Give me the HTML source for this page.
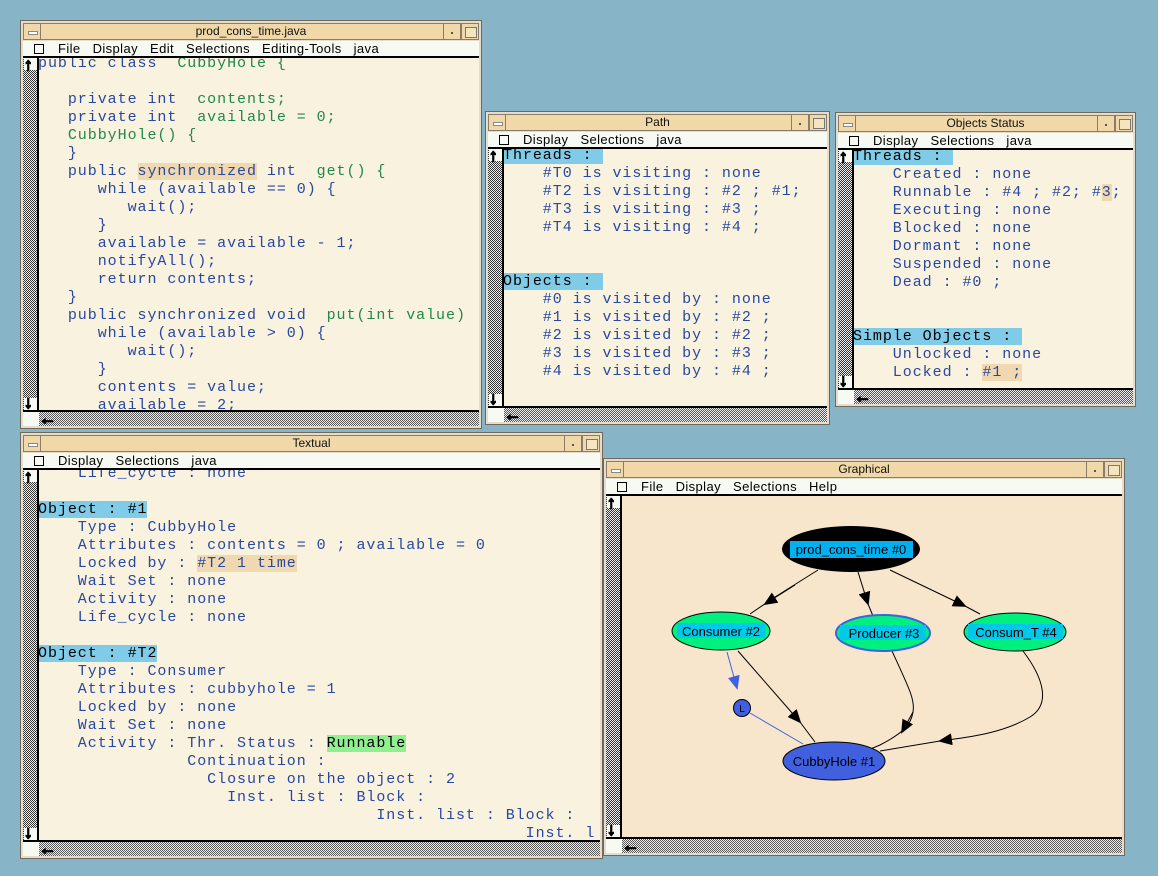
<!DOCTYPE html>
<html><head><meta charset="utf-8"><style>
*{margin:0;padding:0;box-sizing:border-box}
body{width:1158px;height:876px;background:#88b4c8;position:relative;overflow:hidden;font-family:"Liberation Sans",sans-serif}
.win{position:absolute;background:#e4dccc;border:1px solid #706858}
.title{position:absolute;left:2px;right:2px;top:2px;height:17px;background:#f0d8a8;border:1px solid #8a7c68;font-size:12px;text-align:center;line-height:15px;color:#111}
.bl,.br1,.br2{position:absolute;top:-1px;width:18px;height:17px;border:1px solid #8a7c68;background:#f0d8a8}
.bl{left:-1px}.bl:after{content:"";position:absolute;left:4px;top:7px;width:8px;height:2px;background:#fff;border:1px solid #888}
.br1{right:17px}.br1:after{content:"";position:absolute;left:7px;top:8px;width:2px;height:2px;background:#555}
.br2{right:-1px}.br2:after{content:"";position:absolute;left:3px;top:3px;width:10px;height:9px;border:1px solid #777;background:#f4e4c0}
.menu{position:absolute;left:2px;right:2px;top:20px;height:17px;background:#f6faf2;border-bottom:2px solid #000;font-size:13px;letter-spacing:0.4px;line-height:15px;white-space:nowrap;color:#000}
.menu i{display:inline-block;width:10px;height:10px;border:1px solid #000;margin:0 14px 0 11px;vertical-align:-1px}
.menu b{font-weight:normal;margin-right:12px}
.vs{position:absolute;left:2px;top:37px;bottom:18px;width:16px;border-right:2px solid #000;background:repeating-conic-gradient(#333 0 25%,#eee 0 50%) 0 0/2px 2px}
.vs:before{content:"";position:absolute;left:1px;top:0;width:13px;height:12px;background:#f6faf2}
.vs:after{content:"";position:absolute;left:1px;bottom:0;width:13px;height:12px;background:#f6faf2}
.hs{position:absolute;left:2px;right:2px;bottom:2px;height:16px;border-top:2px solid #000;background:repeating-conic-gradient(#555 0 25%,#eee 0 50%) 0 0/2px 2px}
.hs:before{content:"";position:absolute;left:0;top:0;width:16px;height:14px;background:#f6faf2}
.c{position:absolute;left:18px;right:2px;top:37px;bottom:18px;background:#f9f2df;overflow:hidden}
pre{font-family:"Liberation Mono",monospace;font-size:15px;letter-spacing:0.95px;line-height:18px;color:#2848a0;position:absolute;left:0}
.g{color:#208848}.h{background:#80cce8;color:#000}.o{background:#f0d8b0}.k{background:#90f090;color:#000}
.au,.ad,.al{position:absolute;font-size:17px;font-weight:bold;color:#000;line-height:13px;z-index:2;-webkit-text-stroke:1.5px #000}
.au{left:3px;top:37px}.ad{left:3px;bottom:19px}.al{left:18px;bottom:3px}
</style></head><body>

<!-- Editor -->
<div class="win" style="left:20px;top:20px;width:462px;height:409px">
<div class="title">prod_cons_time.java<div class="bl"></div><div class="br1"></div><div class="br2"></div></div>
<div class="menu"><i></i><b>File</b><b>Display</b><b>Edit</b><b>Selections</b><b>Editing-Tools</b><b>java</b></div>
<div class="vs"></div><div class="hs"></div><span class="au">↑</span><span class="ad">↓</span><span class="al">←</span>
<div class="c"><pre style="top:-3px;left:-1px">public class  <span class="g">CubbyHole {</span>

   private int  <span class="g">contents;</span>
   private int  <span class="g">available = 0;</span>
   <span class="g">CubbyHole() {</span>
   }
   public <span class="o">synchronized</span> int  <span class="g">get() {</span>
      while (available == 0) {
         wait();
      }
      available = available - 1;
      notifyAll();
      return contents;
   }
   public synchronized void  <span class="g">put(int value)</span>
      while (available &gt; 0) {
         wait();
      }
      contents = value;
      available = 2;</pre></div>
</div>

<!-- Path -->
<div class="win" style="left:485px;top:111px;width:345px;height:314px">
<div class="title">Path<div class="bl"></div><div class="br1"></div><div class="br2"></div></div>
<div class="menu"><i></i><b>Display</b><b>Selections</b><b>java</b></div>
<div class="vs"></div><div class="hs"></div><span class="au">↑</span><span class="ad">↓</span><span class="al">←</span>
<div class="c"><pre style="top:-2px;left:-1px"><span class="h">Threads : </span>
    #T0 is visiting : none
    #T2 is visiting : #2 ; #1;
    #T3 is visiting : #3 ;
    #T4 is visiting : #4 ;


<span class="h">Objects : </span>
    #0 is visited by : none
    #1 is visited by : #2 ;
    #2 is visited by : #2 ;
    #3 is visited by : #3 ;
    #4 is visited by : #4 ;</pre></div>
</div>

<!-- Objects Status -->
<div class="win" style="left:835px;top:112px;width:301px;height:295px">
<div class="title">Objects Status<div class="bl"></div><div class="br1"></div><div class="br2"></div></div>
<div class="menu"><i></i><b>Display</b><b>Selections</b><b>java</b></div>
<div class="vs"></div><div class="hs"></div><span class="au">↑</span><span class="ad">↓</span><span class="al">←</span>
<div class="c"><pre style="top:-2px;left:-1px"><span class="h">Threads : </span>
    Created : none
    Runnable : #4 ; #2; #<span class="o">3</span>;
    Executing : none
    Blocked : none
    Dormant : none
    Suspended : none
    Dead : #0 ;


<span class="h">Simple Objects : </span>
    Unlocked : none
    Locked : <span class="o">#1 ;</span></pre></div>
</div>

<!-- Textual -->
<div class="win" style="left:20px;top:432px;width:583px;height:427px">
<div class="title">Textual<div class="bl"></div><div class="br1"></div><div class="br2"></div></div>
<div class="menu"><i></i><b>Display</b><b>Selections</b><b>java</b></div>
<div class="vs"></div><div class="hs"></div><span class="au">↑</span><span class="ad">↓</span><span class="al">←</span>
<div class="c"><pre style="top:-5px;left:-1px">    Life_cycle : none

<span class="h">Object : #1</span>
    Type : CubbyHole
    Attributes : contents = 0 ; available = 0
    Locked by : <span class="o">#T2 1 time</span>
    Wait Set : none
    Activity : none
    Life_cycle : none

<span class="h">Object : #T2</span>
    Type : Consumer
    Attributes : cubbyhole = 1
    Locked by : none
    Wait Set : none
    Activity : Thr. Status : <span class="k">Runnable</span>
               Continuation :
                 Closure on the object : 2
                   Inst. list : Block :
                                  Inst. list : Block :
                                                 Inst. l</pre></div>
</div>

<!-- Graphical -->
<div class="win" style="left:603px;top:458px;width:522px;height:398px">
<div class="title">Graphical<div class="bl"></div><div class="br1"></div><div class="br2"></div></div>
<div class="menu"><i></i><b>File</b><b>Display</b><b>Selections</b><b>Help</b></div>
<div class="vs"></div><div class="hs"></div><span class="au">↑</span><span class="ad">↓</span><span class="al">←</span>
<div class="c" style="background:#f8e6cc"></div>
</div>

<svg width="1158" height="876" style="position:absolute;left:0;top:0" font-family="Liberation Sans,sans-serif">
<defs><marker id="a" markerWidth="14" markerHeight="12" refX="12" refY="6" orient="auto" markerUnits="userSpaceOnUse"><path d="M0,0 L14,6 L0,12z" fill="#000"/></marker>
<marker id="b" markerWidth="14" markerHeight="12" refX="12" refY="6" orient="auto" markerUnits="userSpaceOnUse"><path d="M0,0 L14,6 L0,12z" fill="#4060e0"/></marker></defs>
<g stroke="#000" fill="none" stroke-width="1">
<path d="M818,570 L775,597 L750,614" />
<path d="M795,585 L765,604" marker-end="url(#a)"/>
<path d="M858,572 L868,604" marker-end="url(#a)"/>
<path d="M868,604 L873,616"/>
<path d="M890,570 L965,606" marker-end="url(#a)"/>
<path d="M965,606 L980,614"/>
<path d="M738,651 L800,722" marker-end="url(#a)"/>
<path d="M800,722 L815,742"/>
<path d="M892,651 C910,690 915,700 913,712 C911,725 903,733 880,745 L868,750" />
<path d="M913,712 L902,732" marker-end="url(#a)"/>
<path d="M1023,651 C1045,680 1050,705 1030,717 C1000,735 960,738 940,741" marker-end="url(#a)"/>
<path d="M940,741 L880,751"/>
</g>
<path d="M727,652 L737,688" stroke="#4060e0" fill="none" marker-end="url(#b)"/>
<path d="M750,713 L803,744" stroke="#4060e0" fill="none"/>
<ellipse cx="851" cy="549" rx="69" ry="23" fill="#000"/>
<rect x="790" y="541" width="123" height="17" fill="#00b0f0"/>
<text x="851" y="554" font-size="13" text-anchor="middle" fill="#000">prod_cons_time #0</text>
<ellipse cx="721" cy="631" rx="49" ry="19" fill="#00f080" stroke="#000"/>
<rect x="677" y="623" width="88" height="15" fill="#00c8e8"/>
<text x="721" y="636" font-size="13" text-anchor="middle">Consumer #2</text>
<ellipse cx="883" cy="633" rx="47" ry="18" fill="#00f080" stroke="#4060e0" stroke-width="2"/>
<rect x="840" y="625" width="86" height="15" fill="#00c8e8"/>
<text x="884" y="638" font-size="13" text-anchor="middle">Producer #3</text>
<ellipse cx="1015" cy="632" rx="51" ry="19" fill="#00f080" stroke="#000"/>
<rect x="968" y="624" width="95" height="15" fill="#00c8e8"/>
<text x="1016" y="637" font-size="13" text-anchor="middle">Consum_T #4</text>
<ellipse cx="834" cy="761" rx="51" ry="19" fill="#4060e0" stroke="#000"/>
<text x="834" y="766" font-size="13" text-anchor="middle">CubbyHole #1</text>
<circle cx="742" cy="708" r="8.5" fill="#4060e0" stroke="#000"/>
<text x="742" y="712" font-size="10" text-anchor="middle">L</text>
</svg>
</body></html>
